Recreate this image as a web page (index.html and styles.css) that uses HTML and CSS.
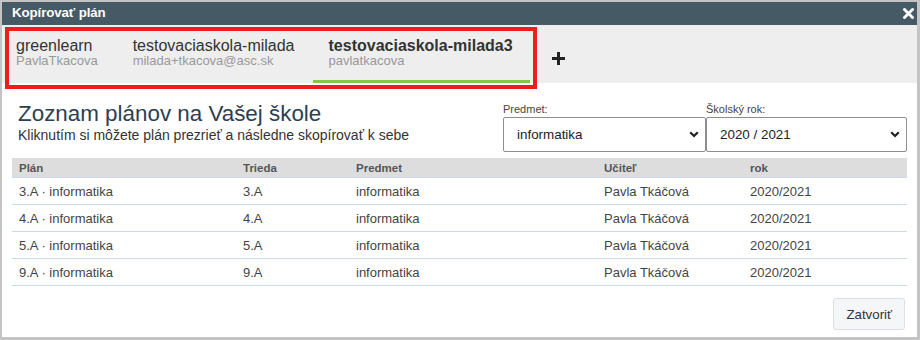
FILE: index.html
```html
<!DOCTYPE html>
<html lang="sk">
<head>
<meta charset="utf-8">
<title>Kopírovať plán</title>
<link rel="stylesheet" href="styles.css">
</head>
<body>
<div class="dialog">
  <div class="titlebar">
    <span class="title">Kopírovať plán</span>
    <svg class="close" width="11" height="11" viewBox="0 0 11 11"><path d="M1.5 1.5 L9.5 9.5 M9.5 1.5 L1.5 9.5" stroke="#fff" stroke-width="2.8" stroke-linecap="square"/></svg>
  </div>
  <div class="tabs">
    <div class="tab first">
      <div class="tab-name">greenlearn</div>
      <div class="tab-user">PavlaTkacova</div>
    </div>
    <div class="tab">
      <div class="tab-name">testovaciaskola-milada</div>
      <div class="tab-user">milada+tkacova@asc.sk</div>
    </div>
    <div class="tab active">
      <div class="tab-name">testovaciaskola-milada3</div>
      <div class="tab-user">pavlatkacova</div>
    </div>
    <div class="tab-add">
      <svg width="13" height="13" viewBox="0 0 13 13"><path d="M6.5 0 V13 M0 6.5 H13" stroke="#222" stroke-width="3"/></svg>
    </div>
  </div>
  <div class="highlight"></div>
  <div class="content">
    <div class="top">
      <div class="intro">
        <h1>Zoznam plánov na Vašej škole</h1>
        <p>Kliknutím si môžete plán prezrieť a následne skopírovať k sebe</p>
      </div>
      <div class="filters">
        <div class="filter subject">
          <div class="filter-label">Predmet:</div>
          <div class="select"><span>informatika</span><svg width="10" height="7" viewBox="0 0 10 7"><path d="M1.2 1.2 L5 5 L8.8 1.2" fill="none" stroke="#222" stroke-width="2.2"/></svg></div>
        </div>
        <div class="filter year">
          <div class="filter-label">Školský rok:</div>
          <div class="select"><span>2020 / 2021</span><svg width="10" height="7" viewBox="0 0 10 7"><path d="M1.2 1.2 L5 5 L8.8 1.2" fill="none" stroke="#222" stroke-width="2.2"/></svg></div>
        </div>
      </div>
    </div>
    <table class="plans">
      <colgroup>
        <col class="c-plan"><col class="c-class"><col class="c-subject"><col class="c-teacher"><col class="c-year">
      </colgroup>
      <thead>
        <tr><th>Plán</th><th>Trieda</th><th>Predmet</th><th>Učiteľ</th><th>rok</th></tr>
      </thead>
      <tbody>
        <tr><td>3.A · informatika</td><td>3.A</td><td>informatika</td><td>Pavla Tkáčová</td><td>2020/2021</td></tr>
        <tr><td>4.A · informatika</td><td>4.A</td><td>informatika</td><td>Pavla Tkáčová</td><td>2020/2021</td></tr>
        <tr><td>5.A · informatika</td><td>5.A</td><td>informatika</td><td>Pavla Tkáčová</td><td>2020/2021</td></tr>
        <tr><td>9.A · informatika</td><td>9.A</td><td>informatika</td><td>Pavla Tkáčová</td><td>2020/2021</td></tr>
      </tbody>
    </table>
    <div class="footer">
      <button class="btn">Zatvoriť</button>
    </div>
  </div>
</div>
</body>
</html>
```
FILE: styles.css
```css
html, body {
  margin: 0;
  padding: 0;
  background: #ffffff;
}

body {
  font-family: "Liberation Sans", Arial, sans-serif;
  color: #333;
}

.dialog {
  position: relative;
  width: 920px;
  height: 340px;
  box-sizing: border-box;
  border-style: solid;
  border-color: #c4c4c4;
  border-width: 2px 3px 3px 2px;
  background: #fff;
  display: flex;
  flex-direction: column;
}

.titlebar {
  height: 23px;
  background: #455a64;
  color: #fff;
  display: flex;
  align-items: center;
  justify-content: space-between;
  padding: 0 3px 0 10px;
  flex: none;
}

.title {
  font-weight: bold;
  font-size: 13.3px;
  line-height: 16px;
  margin-top: -1px;
  letter-spacing: -0.1px;
}

.close {
  display: block;
}

.tabs {
  height: 58px;
  background: #eeeeee;
  display: flex;
  flex: none;
  box-sizing: border-box;
}

.tab {
  padding: 13px 18px 0 16px;
  box-sizing: border-box;
  height: 58px;
  border-bottom: 3px solid transparent;
}

.tab.first {
  padding-left: 14px;
  padding-right: 19px;
}

.tab.active {
  border-bottom-color: #8bc34a;
  padding-right: 17px;
}

.tab-name {
  font-size: 16px;
  line-height: 16px;
  color: #333;
  white-space: nowrap;
}

.tab.active .tab-name {
  font-weight: bold;
}

.tab-user {
  font-size: 13px;
  line-height: 14px;
  color: #999;
  white-space: nowrap;
}

.tab-add {
  padding: 27px 0 0 22px;
}

.tab-add svg {
  display: block;
}

.highlight {
  position: absolute;
  left: 3px;
  top: 25px;
  width: 532px;
  height: 62px;
  box-sizing: border-box;
  border: 4px solid #ed1c24;
  pointer-events: none;
}

.content {
  flex: 1;
  display: flex;
  flex-direction: column;
  padding: 0 10px;
}

.top {
  display: flex;
  justify-content: space-between;
  align-items: flex-start;
  padding-top: 18px;
}

.intro {
  padding-left: 6px;
}

.intro h1 {
  margin: 0;
  font-size: 22.4px;
  line-height: 26px;
  font-weight: normal;
  color: #2d3e50;
}

.intro p {
  margin: 0;
  font-size: 14px;
  line-height: 16px;
  color: #333;
}

.filters {
  display: flex;
  padding-top: 2px;
}

.filter-label {
  font-size: 11px;
  line-height: 13px;
  color: #444;
  margin-bottom: 1px;
}

.subject {
  width: 203px;
}

.year {
  width: 201px;
}

.select {
  height: 35px;
  box-sizing: border-box;
  border: 1px solid #8e8e8e;
  border-radius: 2px;
  display: flex;
  align-items: center;
  justify-content: space-between;
  padding: 0 6px 0 13px;
  font-size: 13.4px;
  color: #222;
}

.select svg {
  display: block;
}

.plans {
  margin-top: 6px;
  width: 100%;
  border-collapse: collapse;
  table-layout: fixed;
}

.c-plan { width: 224px; }
.c-class { width: 113px; }
.c-subject { width: 248px; }
.c-teacher { width: 146px; }
.c-year { width: 164px; }

.plans th {
  background: #dddddd;
  height: 19px;
  padding: 0 7px;
  text-align: left;
  font-size: 11.5px;
  font-weight: bold;
  color: #555;
  border-bottom: 1px solid #c9dbea;
}

.plans td {
  height: 26px;
  padding: 0 7px;
  font-size: 13px;
  color: #444;
  border-bottom: 1px solid #c9dbea;
  white-space: nowrap;
}

.footer {
  display: flex;
  justify-content: flex-end;
  padding: 12px 2px 0 0;
}

.btn {
  height: 32px;
  padding: 0 12px;
  background: #f5f6f8;
  border: 1px solid #dcdfe4;
  border-radius: 3px;
  font-family: "Liberation Sans", Arial, sans-serif;
  font-size: 13.3px;
  color: #333;
}
```
